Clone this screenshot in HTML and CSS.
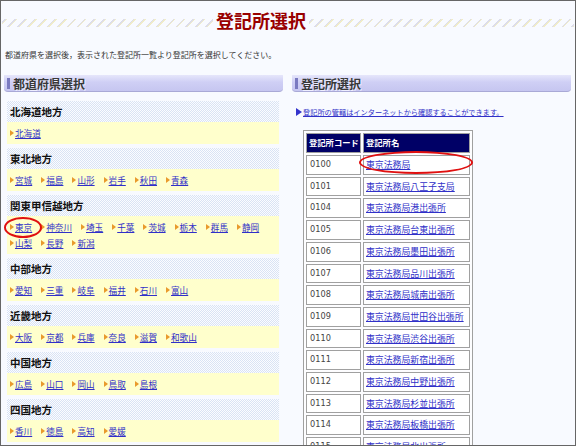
FILE: index.html
```html
<!DOCTYPE html>
<html lang="ja">
<head>
<meta charset="utf-8">
<title>登記所選択</title>
<link rel="stylesheet" href="styles.css">
</head>
<body>
<div class="frame">
  <div class="title-bar"><h1 class="title">登記所選択</h1></div>
  <p class="lead">都道府県を選択後，表示された登記所一覧より登記所を選択してください。</p>
  <div class="columns">
    <div class="col">
      <h2 class="panel-head">都道府県選択</h2>
      <div class="regions">
        <div class="region">
          <h3 class="region-head">北海道地方</h3>
          <div class="region-body"><a class="pref" href="#">北海道</a></div>
        </div>
        <div class="region">
          <h3 class="region-head">東北地方</h3>
          <div class="region-body"><a class="pref" href="#">宮城</a><a class="pref" href="#">福島</a><a class="pref" href="#">山形</a><a class="pref" href="#">岩手</a><a class="pref" href="#">秋田</a><a class="pref" href="#">青森</a></div>
        </div>
        <div class="region">
          <h3 class="region-head">関東甲信越地方</h3>
          <div class="region-body"><a class="pref" href="#">東京</a><a class="pref" href="#">神奈川</a><a class="pref" href="#">埼玉</a><a class="pref" href="#">千葉</a><a class="pref" href="#">茨城</a><a class="pref" href="#">栃木</a><a class="pref" href="#">群馬</a><a class="pref" href="#">静岡</a><a class="pref" href="#">山梨</a><a class="pref" href="#">長野</a><a class="pref" href="#">新潟</a></div>
        </div>
        <div class="region">
          <h3 class="region-head">中部地方</h3>
          <div class="region-body"><a class="pref" href="#">愛知</a><a class="pref" href="#">三重</a><a class="pref" href="#">岐阜</a><a class="pref" href="#">福井</a><a class="pref" href="#">石川</a><a class="pref" href="#">富山</a></div>
        </div>
        <div class="region">
          <h3 class="region-head">近畿地方</h3>
          <div class="region-body"><a class="pref" href="#">大阪</a><a class="pref" href="#">京都</a><a class="pref" href="#">兵庫</a><a class="pref" href="#">奈良</a><a class="pref" href="#">滋賀</a><a class="pref" href="#">和歌山</a></div>
        </div>
        <div class="region">
          <h3 class="region-head">中国地方</h3>
          <div class="region-body"><a class="pref" href="#">広島</a><a class="pref" href="#">山口</a><a class="pref" href="#">岡山</a><a class="pref" href="#">鳥取</a><a class="pref" href="#">島根</a></div>
        </div>
        <div class="region">
          <h3 class="region-head">四国地方</h3>
          <div class="region-body"><a class="pref" href="#">香川</a><a class="pref" href="#">徳島</a><a class="pref" href="#">高知</a><a class="pref" href="#">愛媛</a></div>
        </div>
      </div>
    </div>
    <div class="col">
      <h2 class="panel-head">登記所選択</h2>
      <p class="note"><a href="#">登記所の管轄はインターネットから確認することができます。</a></p>
      <table class="offices">
        <thead>
          <tr><th class="c-code">登記所コード</th><th class="c-name">登記所名</th></tr>
        </thead>
        <tbody>
          <tr><td class="code">0100</td><td class="name"><a href="#">東京法務局</a></td></tr>
          <tr><td class="code">0101</td><td class="name"><a href="#">東京法務局八王子支局</a></td></tr>
          <tr><td class="code">0104</td><td class="name"><a href="#">東京法務局港出張所</a></td></tr>
          <tr><td class="code">0105</td><td class="name"><a href="#">東京法務局台東出張所</a></td></tr>
          <tr><td class="code">0106</td><td class="name"><a href="#">東京法務局墨田出張所</a></td></tr>
          <tr><td class="code">0107</td><td class="name"><a href="#">東京法務局品川出張所</a></td></tr>
          <tr><td class="code">0108</td><td class="name"><a href="#">東京法務局城南出張所</a></td></tr>
          <tr><td class="code">0109</td><td class="name"><a href="#">東京法務局世田谷出張所</a></td></tr>
          <tr><td class="code">0110</td><td class="name"><a href="#">東京法務局渋谷出張所</a></td></tr>
          <tr><td class="code">0111</td><td class="name"><a href="#">東京法務局新宿出張所</a></td></tr>
          <tr><td class="code">0112</td><td class="name"><a href="#">東京法務局中野出張所</a></td></tr>
          <tr><td class="code">0113</td><td class="name"><a href="#">東京法務局杉並出張所</a></td></tr>
          <tr><td class="code">0114</td><td class="name"><a href="#">東京法務局板橋出張所</a></td></tr>
          <tr><td class="code">0115</td><td class="name"><a href="#">東京法務局北出張所</a></td></tr>
        </tbody>
      </table>
    </div>
  </div>
  <span class="mark mark-pref"></span>
  <span class="mark mark-office"></span>
</div>
</body>
</html>
```

FILE: styles.css
```css
* { box-sizing: border-box; }
html, body { margin: 0; padding: 0; background: #f8faff; }
body {
  font-family: "Noto Sans CJK JP", "Noto Sans", sans-serif;
  color: #333;
}
a { color: #3030c8; }

.frame {
  position: relative;
  width: 576px;
  height: 446px;
  border: 1px solid #666;
  background: #f8faff;
  overflow: hidden;
}

.title-bar {
  margin: 9px 1px 0 1px;
  height: 21px;
  display: flex;
  background-image: repeating-linear-gradient(135deg, transparent 0 2px, #dcdcea 2px 3px, #f0ecc8 3px 4px, transparent 4px 7px);
  background-size: 100% 8px;
  background-position: 0 9px;
  background-repeat: no-repeat;
}
.title {
  margin: 0 0 0 211px;
  padding: 0 3px;
  font-size: 18px;
  line-height: 21px;
  font-weight: bold;
  color: #990000;
  background: #f8faff;
}

.lead {
  margin: 18px 0 0 4px;
  font-size: 8px;
  line-height: 12px;
  color: #333;
}

.columns {
  display: grid;
  grid-template-columns: 279px 279px;
  column-gap: 9px;
  margin: 14px 0 0 3px;
}

.panel-head {
  position: relative;
  margin: 0;
  height: 17px;
  padding-left: 9px;
  font-size: 12px;
  line-height: 17px;
  font-weight: bold;
  color: #383838;
  text-shadow: 1px 1px 0 #eeeeff;
  background: linear-gradient(#e6e6fb, #cfcff5 45%, #c6c6f0);
  border-bottom: 1px solid #a9a9d6;
  border-radius: 0 0 4px 4px;
}
.panel-head::before {
  content: "";
  position: absolute;
  left: 3px;
  top: 3px;
  width: 3px;
  height: 11px;
  background: #7a7ac0;
}

.regions {
  margin: 9px 4px 0 3px;
}
.region { margin-bottom: 4px; }
.region-head {
  margin: 0;
  height: 21px;
  padding-left: 3px;
  font-size: 10.5px;
  line-height: 21px;
  font-weight: bold;
  color: #111;
  background-color: #fbfcff;
  background-image: repeating-conic-gradient(#d9e3f4 0 25%, transparent 0 50%);
  background-size: 2px 2px;
}
.region-body {
  padding: 3px 0 3px 3px;
  background: #ffffcc;
  font-size: 8.6px;
  line-height: 16px;
}
.pref {
  position: relative;
  display: inline-block;
  padding-left: 5px;
  margin-right: 9px;
  color: #3030c8;
}
.pref::before {
  content: "";
  position: absolute;
  left: 0;
  top: 5px;
  border-left: 4px solid #e99a2c;
  border-top: 3px solid transparent;
  border-bottom: 3px solid transparent;
}

.note {
  position: relative;
  margin: 14px 0 0 0;
  padding-left: 11px;
  font-size: 7.2px;
  line-height: 12px;
}
.note::before {
  content: "";
  position: absolute;
  left: 4px;
  top: 2px;
  border-left: 6px solid #3333cc;
  border-top: 4px solid transparent;
  border-bottom: 4px solid transparent;
}
.note a { color: #3030c8; }

.offices {
  margin: 12px 0 0 11px;
  border: 1px solid #a0a0a0;
  border-spacing: 2px;
  background: #fdfdff;
  font-size: 8.9px;
}
.offices th, .offices td {
  border: 1px solid #a0a0a0;
  height: 19.7px;
  line-height: 17.7px;
  padding: 0;
  text-align: left;
  white-space: nowrap;
  vertical-align: middle;
}
.offices th {
  background: #000066;
  color: #fff;
  font-size: 8.3px;
  font-weight: bold;
  height: 20px;
}
.c-code { width: 55px; padding-left: 2px !important; }
.c-name { width: 107px; padding-left: 2px !important; }
.offices td { background: #fff; }
.offices td.code {
  font-family: "DejaVu Sans", "Noto Sans CJK JP", sans-serif;
  font-size: 8.2px;
  color: #444;
  padding-left: 3px;
}
.offices td.name {
  font-size: 8.9px;
  padding-left: 2px;
}
.offices td a { color: #3030c8; }

.mark {
  position: absolute;
  border: 2px solid #e01010;
  border-radius: 50%;
  pointer-events: none;
}
.mark-pref { left: 3px; top: 216px; width: 38px; height: 21px; }
.mark-office { left: 358px; top: 150px; width: 114px; height: 23px; }
```
